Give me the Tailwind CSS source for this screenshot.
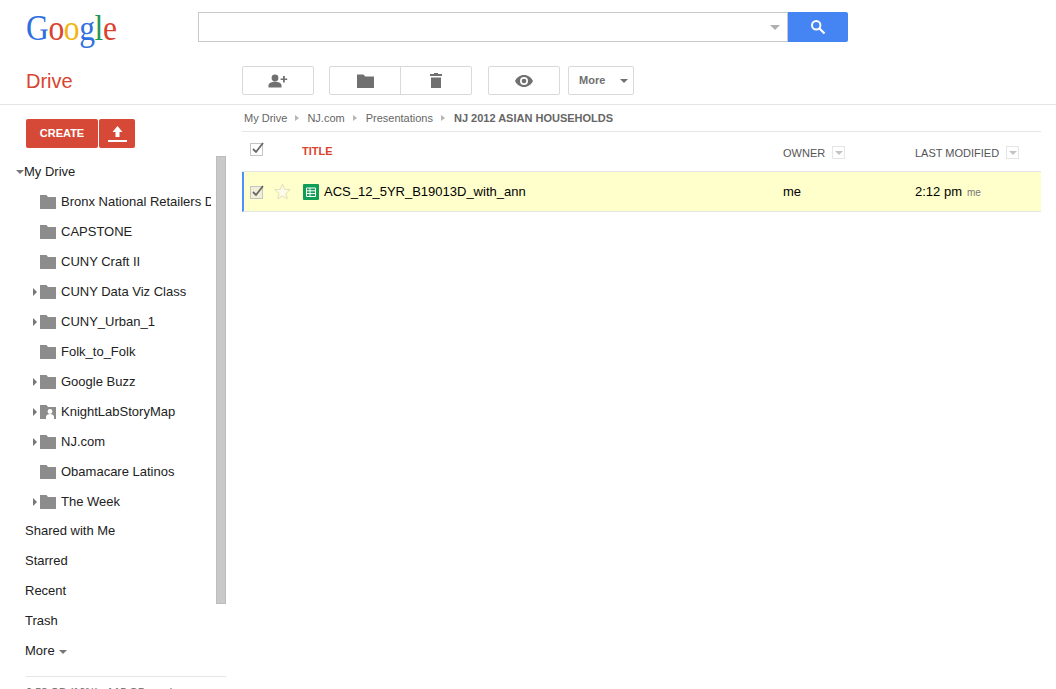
<!DOCTYPE html>
<html lang="en">

<head>
    <meta charset="UTF-8">
    <meta name="viewport" content="width=device-width, initial-scale=1.0">
    <title>Google Drive</title>
    <script src="https://cdn.jsdelivr.net/npm/@tailwindcss/browser@4"></script>
</head>

<body class="bg-white h-[689px] overflow-hidden font-['Liberation_Sans',Arial,sans-serif] text-[13px] text-[#222]">
    <!-- search bar -->
    <header class="h-[54px] flex items-start pt-3">
        <div class="w-[198px] pl-[26px] h-[30px] flex items-center">
            <span class="font-['Liberation_Serif',serif] text-[35px] leading-none tracking-[-0.4px] mt-[3px] inline-block origin-left scale-x-[0.9]"><span class="text-[#2f70e0]">G</span><span class="text-[#d9432f]">o</span><span class="text-[#f2b50f]">o</span><span class="text-[#2f70e0]">g</span><span class="text-[#1f9a55]">l</span><span class="text-[#d9432f]">e</span></span>
        </div>
        <div class="w-[590px] h-[30px] border border-[#c8c8c8] flex items-center justify-end pr-[7px]">
            <div class="w-0 h-0 border-x-[5px] border-x-transparent border-t-[5px] border-t-[#b0b0b0]"></div>
        </div>
        <button class="w-[60px] h-[30px] bg-[#4585f3] rounded-r-[2px] flex items-center justify-center">
            <svg width="16" height="16" viewBox="0 0 16 16" fill="none" stroke="white"><circle cx="6.2" cy="6.2" r="4.2" stroke-width="2"/><path d="M9.500 9.500L14.500 14.500" stroke-width="2.200"/></svg>
        </button>
    </header>

    <!-- toolbar -->
    <div class="h-[51px] border-b border-[#e5e5e5] flex">
        <div class="w-[242px] pl-[26px] pt-[13px] text-[20px] leading-[28px] text-[#d9432f]">Drive</div>
        <div class="flex items-start pt-3">
            <button class="w-[72px] h-[29px] border border-[#d9d9d9] rounded-[2px] flex items-center justify-center">
                <svg width="20" height="14" viewBox="0 0 20 14" fill="#707070"><circle cx="7" cy="4" r="3.400"/><path d="M0.500 13.500v-2.200c0-2.400 4-3.500 6.500-3.500s6.500 1.100 6.500 3.500v2.200z"/><path d="M15 2h1.800v2.400h2.400v1.700h-2.400v2.400H15V6.100h-2.400V4.400H15z"/></svg>
            </button>
            <div class="ml-[15px] w-[143px] h-[29px] border border-[#d9d9d9] rounded-[2px] flex">
                <div class="w-[71px] border-r border-[#d9d9d9] flex items-center justify-center">
                    <svg width="17" height="14" viewBox="0 0 17 14" fill="#707070"><path d="M0 0.500h6.500l1.800 2H17V14H0z"/></svg>
                </div>
                <div class="flex-1 flex items-center justify-center">
                    <svg width="12" height="15" viewBox="0 0 12 15" fill="#707070"><path d="M4 0h4v1h4v2H0V1h4z"/><path d="M1 4.500h10V15H1z"/></svg>
                </div>
            </div>
            <button class="ml-[16px] w-[72px] h-[29px] border border-[#d9d9d9] rounded-[2px] flex items-center justify-center">
                <svg width="18" height="12" viewBox="0 0 18 12"><path fill="#707070" fill-rule="evenodd" d="M9 0c4 0 7.300 2.500 9 6-1.700 3.500-5 6-9 6S1.700 9.500 0 6c1.700-3.500 5-6 9-6zm0 2a4 4 0 100 8 4 4 0 000-8z"/><circle cx="9" cy="6" r="2.300" fill="#707070"/></svg>
            </button>
            <button class="ml-2 w-[66px] h-[29px] border border-[#d9d9d9] rounded-[2px] flex items-center pl-[10px] text-[11px] font-bold text-[#707070]">
                More
                <span class="ml-[15px] w-0 h-0 border-x-[4px] border-x-transparent border-t-[4px] border-t-[#707070]"></span>
            </button>
        </div>
    </div>

    <div class="flex">
        <!-- sidebar -->
        <aside class="w-[242px] shrink-0 relative">
            <div class="flex pl-[26px] pt-[14px] gap-px">
                <button class="w-[72px] h-[29px] bg-[#d64937] rounded-[2px] text-white text-[11px] font-bold">CREATE</button>
                <button class="w-[36px] h-[29px] bg-[#d64937] rounded-[2px] flex items-center justify-center">
                    <svg width="19" height="17" viewBox="0 0 19 17" fill="white"><path d="M9.500 1l5 6h-3v5h-4V7h-3z"/><path d="M0 15h19v2H0z"/></svg>
                </button>
            </div>

            <div class="w-[226px] h-[500px] mt-[9px] overflow-hidden">
                <div class="h-[30px] pl-4 flex items-center">
                    <span class="w-0 h-0 border-x-[4px] border-x-transparent border-t-[4px] border-t-[#777]"></span>
                    <span class="text-[#222]">My Drive</span>
                </div>

                <div class="h-[30px] pl-10 flex items-center w-[211px]"><svg class="shrink-0" width="16" height="14" viewBox="0 0 16 14" fill="#8c8c8c"><path d="M0 0h6.500l1.500 2h8v12H0z"/></svg><span class="ml-[5px] whitespace-nowrap overflow-hidden">Bronx National Retailers D</span></div>
                <div class="h-[30px] pl-10 flex items-center"><svg width="16" height="14" viewBox="0 0 16 14" fill="#8c8c8c"><path d="M0 0h6.500l1.500 2h8v12H0z"/></svg><span class="ml-[5px]">CAPSTONE</span></div>
                <div class="h-[30px] pl-10 flex items-center"><svg width="16" height="14" viewBox="0 0 16 14" fill="#8c8c8c"><path d="M0 0h6.500l1.500 2h8v12H0z"/></svg><span class="ml-[5px]">CUNY Craft II</span></div>
                <div class="h-[30px] pl-[33px] flex items-center"><span class="w-0 h-0 mr-[3px] border-y-[4px] border-y-transparent border-l-[4px] border-l-[#777]"></span><svg width="16" height="14" viewBox="0 0 16 14" fill="#8c8c8c"><path d="M0 0h6.500l1.500 2h8v12H0z"/></svg><span class="ml-[5px]">CUNY Data Viz Class</span></div>
                <div class="h-[30px] pl-[33px] flex items-center"><span class="w-0 h-0 mr-[3px] border-y-[4px] border-y-transparent border-l-[4px] border-l-[#777]"></span><svg width="16" height="14" viewBox="0 0 16 14" fill="#8c8c8c"><path d="M0 0h6.500l1.500 2h8v12H0z"/></svg><span class="ml-[5px]">CUNY_Urban_1</span></div>
                <div class="h-[30px] pl-10 flex items-center"><svg width="16" height="14" viewBox="0 0 16 14" fill="#8c8c8c"><path d="M0 0h6.500l1.500 2h8v12H0z"/></svg><span class="ml-[5px]">Folk_to_Folk</span></div>
                <div class="h-[30px] pl-[33px] flex items-center"><span class="w-0 h-0 mr-[3px] border-y-[4px] border-y-transparent border-l-[4px] border-l-[#777]"></span><svg width="16" height="14" viewBox="0 0 16 14" fill="#8c8c8c"><path d="M0 0h6.500l1.500 2h8v12H0z"/></svg><span class="ml-[5px]">Google Buzz</span></div>
                <div class="h-[30px] pl-[33px] flex items-center"><span class="w-0 h-0 mr-[3px] border-y-[4px] border-y-transparent border-l-[4px] border-l-[#777]"></span><svg width="16" height="14" viewBox="0 0 16 14"><path fill="#8c8c8c" d="M0 0h6.500l1.500 2h8v12H0z"/><circle cx="10" cy="6.500" r="2.400" fill="white"/><path fill="white" d="M6 14v-2c0-2 2-3 4-3s4 1 4 3v2z"/></svg><span class="ml-[5px]">KnightLabStoryMap</span></div>
                <div class="h-[30px] pl-[33px] flex items-center"><span class="w-0 h-0 mr-[3px] border-y-[4px] border-y-transparent border-l-[4px] border-l-[#777]"></span><svg width="16" height="14" viewBox="0 0 16 14" fill="#8c8c8c"><path d="M0 0h6.500l1.500 2h8v12H0z"/></svg><span class="ml-[5px]">NJ.com</span></div>
                <div class="h-[30px] pl-10 flex items-center"><svg width="16" height="14" viewBox="0 0 16 14" fill="#8c8c8c"><path d="M0 0h6.500l1.500 2h8v12H0z"/></svg><span class="ml-[5px]">Obamacare Latinos</span></div>
                <div class="h-[30px] pl-[33px] flex items-center"><span class="w-0 h-0 mr-[3px] border-y-[4px] border-y-transparent border-l-[4px] border-l-[#777]"></span><svg width="16" height="14" viewBox="0 0 16 14" fill="#8c8c8c"><path d="M0 0h6.500l1.500 2h8v12H0z"/></svg><span class="ml-[5px]">The Week</span></div>

                <div class="h-[30px] pl-[25px] -mt-px flex items-center">Shared with Me</div>
                <div class="h-[30px] pl-[25px] flex items-center">Starred</div>
                <div class="h-[30px] pl-[25px] flex items-center">Recent</div>
                <div class="h-[30px] pl-[25px] flex items-center">Trash</div>
                <div class="h-[30px] pl-[25px] flex items-center">More<span class="ml-1 mt-px w-0 h-0 border-x-[4px] border-x-transparent border-t-[4px] border-t-[#777]"></span></div>
            </div>

            <!-- sidebar scrollbar -->
            <div class="absolute left-[216px] top-[51px] w-[10px] h-[448px] bg-[#c9c9c9] border border-[#bdbdbd]"></div>

            <div class="ml-[26px] w-[200px] mt-[19px] border-t border-[#e5e5e5] pt-[7px] text-[11px] text-[#666] whitespace-nowrap">0.58 GB (10%) of 15 GB used</div>
        </aside>

        <!-- file list -->
        <main class="w-[799px]">
            <div class="h-[27px] border-b border-[#e5e5e5] flex items-center pl-[2px] text-[11px] text-[#666]">
                <span>My Drive</span>
                <span class="mx-2 w-0 h-0 border-y-[3.500px] border-y-transparent border-l-[4px] border-l-[#b5b5b5]"></span>
                <span>NJ.com</span>
                <span class="ml-2 mr-[9px] w-0 h-0 border-y-[3.500px] border-y-transparent border-l-[4px] border-l-[#b5b5b5]"></span>
                <span>Presentations</span>
                <span class="ml-2 mr-[9px] w-0 h-0 border-y-[3.500px] border-y-transparent border-l-[4px] border-l-[#b5b5b5]"></span>
                <span class="font-bold text-[#666]">NJ 2012 ASIAN HOUSEHOLDS</span>
            </div>

            <div class="h-[40px] border-b border-[#e5e5e5] flex text-[11px] text-[#555]">
                <div class="w-[60px] pl-2 pt-[10px]">
                    <svg width="14" height="14" viewBox="0 0 14 14" fill="none"><rect x="0.500" y="1.500" width="12" height="12" stroke="#c4c4c4"/><path d="M3 7l3 3 7-9" stroke="#666" stroke-width="1.800"/></svg>
                </div>
                <div class="w-[481px] pt-[11px] font-bold text-[#d9432f]">TITLE</div>
                <div class="w-[132px] pt-[13px] flex items-start">OWNER<span class="ml-[7px] mt-px w-[13px] h-[13px] border border-[#e5e5e5] flex items-center justify-center"><span class="w-0 h-0 border-x-[4px] border-x-transparent border-t-[4px] border-t-[#c4c4c4]"></span></span></div>
                <div class="pt-[13px] flex items-start">LAST MODIFIED<span class="ml-[7px] mt-px w-[13px] h-[13px] border border-[#e5e5e5] flex items-center justify-center"><span class="w-0 h-0 border-x-[4px] border-x-transparent border-t-[4px] border-t-[#c4c4c4]"></span></span></div>
            </div>

            <div class="h-[40px] bg-[#ffffcc] border-b border-[#e5e5e5] border-l-2 border-l-[#4d90fe] flex items-center text-black">
                <div class="w-[59px] pl-[6px] flex items-center gap-[10px]">
                    <svg width="14" height="14" viewBox="0 0 14 14" fill="none"><rect x="0.500" y="1.500" width="12" height="12" fill="#f2efd8" stroke="#c4c4c4"/><path d="M3 7l3 3 7-9" stroke="#666" stroke-width="1.800"/></svg>
                    <svg width="17" height="17" viewBox="0 0 17 17"><path d="M8.500 1l2.200 5.200 5.600.5-4.300 3.700 1.300 5.500-4.800-2.900-4.800 2.900 1.300-5.500L.7 6.700l5.600-.5z" fill="#fbfbe6" stroke="#e3e0b8"/></svg>
                </div>
                <div class="w-[480px] flex items-center">
                    <svg width="16" height="16" viewBox="0 0 16 16"><rect width="16" height="16" rx="1" fill="#0f9d58"/><path d="M3.500 4h9v8.500h-9z" fill="none" stroke="white"/><path d="M3.500 6.800h9M3.500 9.600h9M7 4v8.500" stroke="white"/></svg>
                    <span class="ml-[5px]">ACS_12_5YR_B19013D_with_ann</span>
                </div>
                <div class="w-[132px]">me</div>
                <div class="flex items-center">2:12 pm<span class="ml-[5px] mt-px text-[10px] text-[#777]">me</span></div>
            </div>
        </main>
    </div>
</body>

</html>
